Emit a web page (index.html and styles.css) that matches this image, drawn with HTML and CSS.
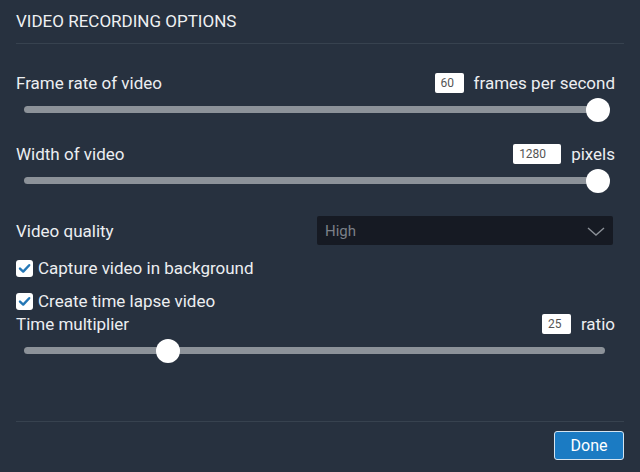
FILE: index.html
```html
<!DOCTYPE html>
<html>
<head>
<meta charset="utf-8">
<link rel="stylesheet" href="styles.css">
</head>
<body>
<div class="dialog">
  <div class="header"><h1 class="title">VIDEO RECORDING OPTIONS</h1></div>

  <div class="row row-first">
    <span class="label">Frame rate of video</span>
    <span class="value"><span class="num-input w-sm">60</span><span class="unit">frames per second</span></span>
  </div>
  <div class="slider"><div class="track"></div><div class="thumb" style="left: 570px"></div></div>

  <div class="row row-second">
    <span class="label">Width of video</span>
    <span class="value"><span class="num-input w-lg">1280</span><span class="unit">pixels</span></span>
  </div>
  <div class="slider"><div class="track"></div><div class="thumb" style="left: 570px"></div></div>

  <div class="row row-select">
    <span class="label">Video quality</span>
    <div class="select">
      <span class="select-text">High</span>
      <svg class="chevron" width="18" height="9" viewBox="0 0 18 9"><path d="M1 1 L9 8 L17 1" fill="none" stroke="#8b9097" stroke-width="1.4"/></svg>
    </div>
  </div>

  <label class="check-row check-first">
    <span class="box"><svg width="17" height="17" viewBox="0 0 17 17"><path d="M4 8.6 L7.2 11.6 L13.2 5.2" fill="none" stroke="#2477b6" stroke-width="2.4" stroke-linecap="round" stroke-linejoin="round"/></svg></span>
    <span class="check-label">Capture video in background</span>
  </label>
  <label class="check-row check-second">
    <span class="box"><svg width="17" height="17" viewBox="0 0 17 17"><path d="M4 8.6 L7.2 11.6 L13.2 5.2" fill="none" stroke="#2477b6" stroke-width="2.4" stroke-linecap="round" stroke-linejoin="round"/></svg></span>
    <span class="check-label">Create time lapse video</span>
  </label>

  <div class="row row-third">
    <span class="label">Time multiplier</span>
    <span class="value"><span class="num-input w-sm">25</span><span class="unit">ratio</span></span>
  </div>
  <div class="slider"><div class="track"></div><div class="thumb" style="left: 140px"></div></div>

  <div class="footer">
    <button class="done">Done</button>
  </div>
</div>
</body>
</html>
```

FILE: styles.css
```css
* { box-sizing: border-box; }
html, body {
  margin: 0;
  padding: 0;
  width: 640px;
  height: 472px;
  background: #27313f;
  overflow: hidden;
}
body {
  font-family: Roboto, "Liberation Sans", sans-serif;
  color: #eceef1;
}
.dialog {
  display: flex;
  flex-direction: column;
  padding: 0 16px;
}
.header {
  height: 44px;
  border-bottom: 1px solid #37424f;
  display: flex;
  align-items: center;
}
.title {
  margin: 0;
  font-size: 17px;
  font-weight: 400;
  color: #eef0f2;
  padding-bottom: 1px;
}
.row {
  display: flex;
  align-items: center;
  justify-content: space-between;
  height: 20px;
}
.row-first { margin-top: 29px; }
.row-second { margin-top: 22px; }
.row-third { margin-top: 4px; }
.label {
  font-size: 17px;
  color: #eceef1;
}
.value {
  display: flex;
  align-items: center;
}
.num-input {
  height: 20px;
  background: #ffffff;
  border-radius: 2px;
  color: #555;
  font-size: 12px;
  line-height: 20px;
  padding-left: 6px;
}
.w-sm { width: 29px; }
.w-lg { width: 48px; }
.unit {
  margin-left: 10px;
  font-size: 17px;
  margin-right: 9px;
}
.slider {
  position: relative;
  height: 24px;
  margin-top: 5px;
}
.track {
  position: absolute;
  left: 8px;
  right: 19px;
  top: 8px;
  height: 7px;
  border-radius: 4px;
  background: #8c9299;
}
.thumb {
  position: absolute;
  top: 0;
  width: 24px;
  height: 24px;
  border-radius: 50%;
  background: #ffffff;
}
.row-select {
  height: 29px;
  margin-top: 23px;
}
.select {
  width: 296px;
  height: 29px;
  margin-right: 11px;
  background: #161a23;
  border-radius: 2px;
  display: flex;
  align-items: center;
  justify-content: space-between;
  padding: 0 8px;
}
.select-text {
  font-size: 15px;
  color: #7b8088;
}
.chevron { display: block; margin-top: 1px; }
.check-row {
  display: flex;
  align-items: center;
  height: 18px;
}
.check-first { margin-top: 14px; }
.check-second { margin-top: 15px; }
.box {
  width: 17px;
  height: 17px;
  background: #ffffff;
  border-radius: 3px;
  display: block;
}
.box svg { display: block; }
.check-label {
  margin-left: 5px;
  font-size: 17px;
}
.footer {
  margin-top: 58px;
  border-top: 1px solid #37424f;
  padding-top: 9px;
  display: flex;
  justify-content: flex-end;
}
.done {
  width: 70px;
  height: 29px;
  background: #1b7bc3;
  border: 1.5px solid #d5e4f0;
  border-radius: 3px;
  color: #ffffff;
  font-family: Roboto, "Liberation Sans", sans-serif;
  font-size: 16px;
  padding: 0;
}
```
